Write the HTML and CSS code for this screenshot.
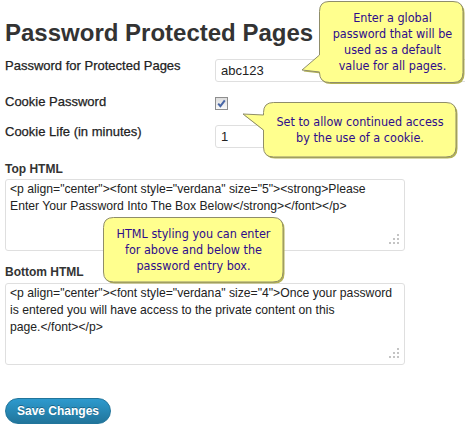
FILE: index.html
```html
<!DOCTYPE html>
<html>
<head>
<meta charset="utf-8">
<link rel="stylesheet" href="styles.css">
</head>
<body>
<div class="page">
  <h1 class="title">Password Protected Pages</h1>

  <div class="row r1">
    <label class="lbl">Password for Protected Pages</label>
    <input class="txt wide" type="text" value="abc123">
  </div>
  <div class="row r2">
    <label class="lbl lbl-cb">Cookie Password</label>
    <span class="cb"><svg width="13" height="13" viewBox="0 0 13 13"><defs><linearGradient id="cbg" x1="0" y1="0" x2="0" y2="1"><stop offset="0" stop-color="#dcdcdc"/><stop offset="1" stop-color="#fbfbfb"/></linearGradient></defs><rect x="0.5" y="0.5" width="12" height="12" fill="url(#cbg)" stroke="#8e8e8e"/><path d="M3.2 6.6 L5.4 9.2 L9.8 3.4" fill="none" stroke="#4866a6" stroke-width="2"/></svg></span>
  </div>
  <div class="row r3">
    <label class="lbl">Cookie Life (in minutes)</label>
    <input class="txt small" type="text" value="1">
  </div>

  <div class="field f1">
    <div class="flabel">Top HTML</div>
    <div class="ta-wrap">
      <textarea class="ta ta1">&lt;p align="center"&gt;&lt;font style="verdana" size="5"&gt;&lt;strong&gt;Please
Enter Your Password Into The Box Below&lt;/strong&gt;&lt;/font&gt;&lt;/p&gt;</textarea>
      <svg class="grip" width="10" height="10" viewBox="0 0 10 10"><rect x="8" y="0" width="2" height="2"/><rect x="4" y="4" width="2" height="2"/><rect x="8" y="4" width="2" height="2"/><rect x="0" y="8" width="2" height="2"/><rect x="4" y="8" width="2" height="2"/><rect x="8" y="8" width="2" height="2"/></svg>
    </div>
  </div>

  <div class="field f2">
    <div class="flabel">Bottom HTML</div>
    <div class="ta-wrap">
      <textarea class="ta ta2">&lt;p align="center"&gt;&lt;font style="verdana" size="4"&gt;Once your password
is entered you will have access to the private content on this
page.&lt;/font&gt;&lt;/p&gt;</textarea>
      <svg class="grip" width="10" height="10" viewBox="0 0 10 10"><rect x="8" y="0" width="2" height="2"/><rect x="4" y="4" width="2" height="2"/><rect x="8" y="4" width="2" height="2"/><rect x="0" y="8" width="2" height="2"/><rect x="4" y="8" width="2" height="2"/><rect x="8" y="8" width="2" height="2"/></svg>
    </div>
  </div>

  <button class="btn" type="button">Save Changes</button>

  <div class="callout c1">
    <svg class="bubble" viewBox="0 0 145 82" preserveAspectRatio="none">
      <path class="shadow" transform="translate(1.5,1.5)" d="M10 0.5 H134 Q144 0.5 144 10.5 V71.5 Q144 81.5 134 81.5 H10.5 Q0.5 81.5 0.5 71.5 V71 L-17 69 L0.5 54 V10.5 Q0.5 0.5 10 0.5 Z"/>
      <path class="body" d="M10 0.5 H134 Q144 0.5 144 10.5 V71.5 Q144 81.5 134 81.5 H10.5 Q0.5 81.5 0.5 71.5 V71 L-17 69 L0.5 54 V10.5 Q0.5 0.5 10 0.5 Z"/>
    </svg>
    <div class="ctext">Enter a global<br>password that will be<br>used as a default<br>value for all pages.</div>
  </div>

  <div class="callout c2">
    <svg class="bubble" viewBox="0 0 194 56" preserveAspectRatio="none">
      <path class="shadow" transform="translate(1.5,1.5)" d="M10.5 0.5 H183 Q193 0.5 193 10.5 V45 Q193 55 183 55 H10.5 Q0.5 55 0.5 45 V28 L-20 12 L0.5 13 V10.5 Q0.5 0.5 10.5 0.5 Z"/>
      <path class="body" d="M10.5 0.5 H183 Q193 0.5 193 10.5 V45 Q193 55 183 55 H10.5 Q0.5 55 0.5 45 V28 L-20 12 L0.5 13 V10.5 Q0.5 0.5 10.5 0.5 Z"/>
    </svg>
    <div class="ctext">Set to allow continued access<br>by the use of a cookie.</div>
  </div>

  <div class="callout c3">
    <svg class="bubble" viewBox="0 0 181 66" preserveAspectRatio="none">
      <path class="shadow" transform="translate(1.5,1.5)" d="M10.5 0.5 H170 Q180 0.5 180 10.5 V55 Q180 65 170 65 H10.5 Q0.5 65 0.5 55 V10.5 Q0.5 0.5 10.5 0.5 Z"/>
      <path class="body" d="M10.5 0.5 H170 Q180 0.5 180 10.5 V55 Q180 65 170 65 H10.5 Q0.5 65 0.5 55 V10.5 Q0.5 0.5 10.5 0.5 Z"/>
    </svg>
    <div class="ctext">HTML styling you can enter<br>for above and below the<br>password entry box.</div>
  </div>
</div>
</body>
</html>
```
FILE: styles.css
```css
html, body {
  margin: 0;
  padding: 0;
  background: #fff;
}

.page {
  position: relative;
  width: 465px;
  height: 434px;
  padding: 0 5px;
  box-sizing: border-box;
  overflow: hidden;
  font-family: "Liberation Sans", Arial, sans-serif;
  color: #333;
}

.title {
  margin: 19px 0 0;
  font-size: 24px;
  line-height: 28px;
  font-weight: bold;
  color: #333;
  white-space: nowrap;
}

.row {
  display: flex;
  align-items: flex-start;
}

.r1 { margin-top: 12px; }
.r2 { margin-top: 15px; }
.r3 { margin-top: 15px; }

.lbl {
  flex: none;
  width: 210px;
  font-size: 13px;
  line-height: 15px;
  color: #222;
  margin-top: -1px;
  -webkit-text-stroke: 0.25px #222;
}

.lbl-cb { margin-top: -3px; }

.txt {
  flex: none;
  box-sizing: border-box;
  height: 23px;
  margin: 0;
  padding: 0 5px;
  border: 1px solid #dfdfdf;
  border-radius: 3px;
  background: #fff;
  font-family: "Liberation Sans", Arial, sans-serif;
  font-size: 13px;
  color: #222;
  outline: none;
}

.wide { width: 325px; }
.small { width: 220px; }

.cb {
  display: block;
  width: 13px;
  height: 13px;
}

.cb svg { display: block; }

.flabel {
  font-size: 12px;
  line-height: 15px;
  font-weight: bold;
  color: #333;
}

.f1 .flabel { margin: 14px 0 2px; }
.f2 .flabel { margin: 14px 0 3px; }

.ta-wrap {
  position: relative;
  width: 400px;
}

.ta {
  display: block;
  box-sizing: border-box;
  width: 400px;
  margin: 0;
  padding: 1px 4px;
  border: 1px solid #dfdfdf;
  border-radius: 3px;
  background: #fff;
  font-family: "Liberation Sans", Arial, sans-serif;
  font-size: 12.2px;
  line-height: 17px;
  color: #222;
  resize: none;
  overflow: hidden;
  outline: none;
}

.ta1 { height: 72px; }
.ta2 { height: 82px; }

.grip {
  position: absolute;
  right: 6px;
  bottom: 7px;
  fill: #c4c4c4;
}

.btn {
  display: block;
  margin-top: 33px;
  box-sizing: border-box;
  width: 106px;
  height: 26px;
  padding: 0;
  border: 1px solid #21759b;
  border-radius: 13px;
  background: linear-gradient(#2d9ace, #21759b);
  color: #fff;
  font-family: "Liberation Sans", Arial, sans-serif;
  font-size: 12px;
  font-weight: bold;
  text-shadow: 0 -1px 0 rgba(0, 0, 0, 0.3);
}

.callout {
  position: absolute;
  display: flex;
  align-items: center;
  justify-content: center;
}

.bubble {
  position: absolute;
  left: 0;
  top: 0;
  width: 100%;
  height: 100%;
  overflow: visible;
}

.bubble .shadow {
  fill: #b3b155;
}

.bubble .body {
  fill: #ffff8e;
  stroke: #8f8d6a;
  stroke-width: 1;
}

.ctext {
  position: relative;
  text-align: center;
  font-family: "DejaVu Sans Condensed", "DejaVu Sans", sans-serif;
  font-size: 12.5px;
  line-height: 16px;
  color: #2e0c8c;
  white-space: nowrap;
}

.c1 { left: 319px; top: 1px; width: 145px; height: 82px; }
.c1 .ctext { margin-left: 2px; }
.c2 { left: 263px; top: 102px; width: 194px; height: 56px; }
.c3 { left: 103px; top: 217px; width: 181px; height: 66px; }
```
